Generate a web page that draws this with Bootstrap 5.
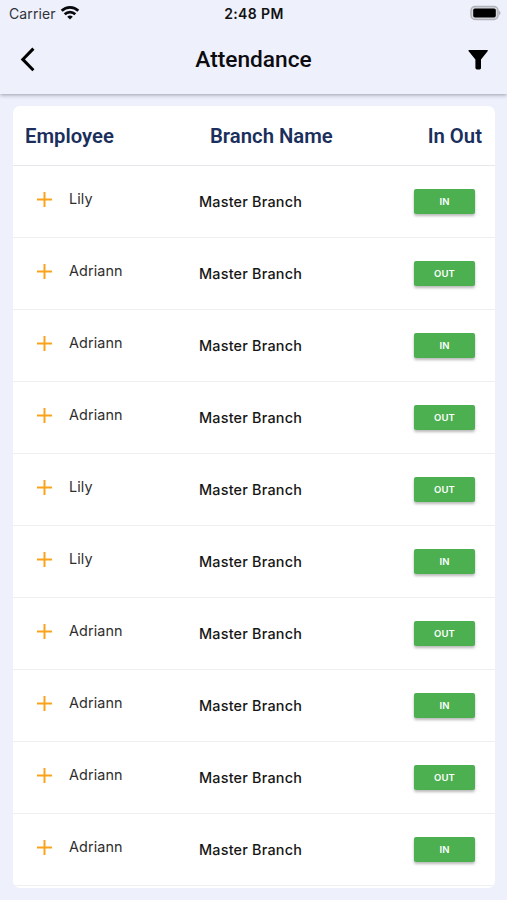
<!DOCTYPE html>
<html lang="en">
<head>
<meta charset="utf-8">
<meta name="viewport" content="width=device-width, initial-scale=1">
<title>Attendance</title>
<link rel="stylesheet" href="https://cdn.jsdelivr.net/npm/bootstrap@5.3.0/dist/css/bootstrap.min.css">
<style>
body { background: #eef0fc; font-family: Inter, sans-serif; color: #111; min-height: 900px; }
.app-head { height: 94px; background: #eef0fc; box-shadow: 0 1px 4px rgba(40, 40, 60, .42); }
.status { height: 28px; padding: 0 6px 0 9px; font-size: 14px; line-height: 28px; }
.status-side { width: 100px; }
.carrier { font-size: 14px; color: #30323a; letter-spacing: .1px; }
.clock { font-size: 14px; font-weight: 600; letter-spacing: .4px; padding-right: 2px; }
.status svg { margin-bottom: 2px; }
.title-bar { height: 64px; padding: 0 19px 0 20px; }
.page-title { font: 500 22.7px/64px Roboto, sans-serif; color: #0b0b10; padding-left: 1px; }
.sheet { margin: 12px 12px 0 13px; height: 782px; border-radius: 7px; background: #fff; overflow: hidden; }
.sheet-head { height: 60px; border-bottom: 1px solid #e6e9ec; font: 600 20.3px/60px Roboto, sans-serif; color: #1a2f5c; }
.col-emp { width: 186px; }
.head-emp { padding-left: 12px; }
.head-branch { padding-left: 11px; }
.head-state { padding-right: 13px; }
.entry { height: 72.05px; padding-right: 20px; border-bottom: 1px solid #eeefef; }
.entry .col-emp { padding: 0 0 5px 24px; }
.emp-name { margin-left: 17px; font-size: 14.4px; line-height: 20px; color: #2e2e2e; letter-spacing: .1px; }
.branch { font-size: 14.4px; font-weight: 500; line-height: 20px; color: #161616; letter-spacing: .2px; }
.btn-state { width: 61px; height: 25px; padding: 0; border: 0; border-radius: 2px; background: #4caf50; color: #fff; font: 600 9.5px/25px Inter, sans-serif; letter-spacing: .2px; box-shadow: 0 2px 3px rgba(0, 0, 0, .28); }
.btn-state:hover { background: #439a46; color: #fff; }
</style>
</head>
<body>
<header class="app-head position-relative">
  <div class="status d-flex justify-content-between align-items-center">
    <div class="status-side d-flex align-items-center">
      <span class="carrier">Carrier</span>
      <svg class="ms-1" width="20" height="16" viewBox="0 0 20 16" fill="none" stroke="#08090c" stroke-width="2.7"><path d="M1.7 5.8C6.3 1.2 13.7 1.2 18.3 5.8"/><path d="M4.7 9.2C7.7 6.3 12.3 6.3 15.3 9.2"/><path d="M10 14.4 7.2 11.7Q10 9.5 12.8 11.7Z" fill="#08090c" stroke="none"/></svg>
    </div>
    <span class="clock">2:48 PM</span>
    <div class="status-side d-flex justify-content-end">
      <svg width="31" height="16" viewBox="0 0 31 16"><rect x="1" y="1.5" width="27" height="13" rx="4" fill="#d6d7df" stroke="#b1b2b9" stroke-width="1.5"/><rect x="3.2" y="3.5" width="22.6" height="9" rx="1.8" fill="#000"/><path d="M29 5.4Q32 8 29 10.6Z" fill="#b1b2b9"/></svg>
    </div>
  </div>
  <div class="title-bar d-flex justify-content-between align-items-center">
    <svg width="18" height="26" viewBox="0 0 18 26" fill="none" stroke="#000" stroke-width="3"><path d="M13.4 1.6 2.8 12.4 13.4 23.2"/></svg>
    <h1 class="page-title m-0">Attendance</h1>
    <svg width="20" height="22" viewBox="0 0 20 22"><path d="M1 1H19.3Q20.3 1.3 19.6 2.3L13 10.5V19Q13 20.4 11.6 20.4H9Q7.6 20.4 7.4 19V10.5L.7 2.3Q0 1.3 1 1Z" fill="#000"/></svg>
  </div>
</header>
<main class="sheet">
  <div class="sheet-head d-flex">
    <div class="head-emp col-emp">Employee</div>
    <div class="head-branch flex-grow-1">Branch Name</div>
    <div class="head-state">In Out</div>
  </div>
  <div id="entries"></div>
</main>
<script src="https://cdn.jsdelivr.net/npm/bootstrap@5.3.0/dist/js/bootstrap.bundle.min.js"></script>
<script>
const entries = [["Lily","IN"],["Adriann","OUT"],["Adriann","IN"],["Adriann","OUT"],["Lily","OUT"],["Lily","IN"],["Adriann","OUT"],["Adriann","IN"],["Adriann","OUT"],["Adriann","IN"]];
document.getElementById("entries").innerHTML = entries.map(([name, state]) => `
  <div class="entry d-flex align-items-center">
    <div class="col-emp d-flex align-items-center">
      <svg width="15" height="15" viewBox="0 0 15 15" stroke="#fba21c" stroke-width="2"><path d="M7.5 0V15M0 7.5H15"/></svg>
      <span class="emp-name">${name}</span>
    </div>
    <div class="branch flex-grow-1">Master Branch</div>
    <button type="button" class="btn btn-state">${state}</button>
  </div>`).join("");
</script>
</body>
</html>
